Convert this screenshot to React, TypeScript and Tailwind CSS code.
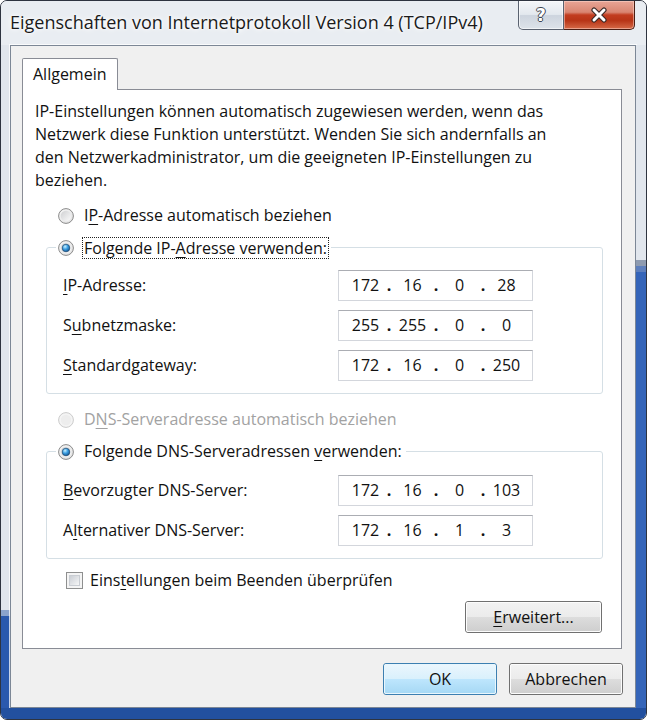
import React from "react";

const U = ({ children }: { children: React.ReactNode }) => (
  <span className="underline decoration-1 underline-offset-[3px]">{children}</span>
);

function Radio({ checked, disabled }: { checked?: boolean; disabled?: boolean }) {
  return (
    <svg width="16" height="16" viewBox="0 0 16 16" className="shrink-0">
      <defs>
        <linearGradient id="rOut" x1="0" y1="0" x2="1" y2="1">
          <stop offset="0" stopColor="#f6f6f6" />
          <stop offset="1" stopColor="#e2e2e2" />
        </linearGradient>
        <linearGradient id="rIn" x1="0" y1="0" x2="1" y2="1">
          <stop offset="0" stopColor="#cfd0d2" />
          <stop offset="1" stopColor="#fbfbfb" />
        </linearGradient>
        <radialGradient id="rDot" cx="0.38" cy="0.32" r="0.75">
          <stop offset="0" stopColor="#c8f0ff" />
          <stop offset="0.45" stopColor="#3ea1e4" />
          <stop offset="1" stopColor="#0d4d88" />
        </radialGradient>
      </defs>
      {disabled ? (
        <>
          <circle cx="8" cy="8" r="7.4" fill="#f4f4f4" stroke="#cbcbcb" strokeWidth="1" />
          <circle cx="8" cy="8" r="5.2" fill="#ededed" />
        </>
      ) : (
        <>
          <circle cx="8" cy="8" r="7.4" fill="url(#rOut)" stroke="#8a8a8a" strokeWidth="1" />
          <circle cx="8" cy="8" r="5.3" fill="url(#rIn)" />
          {checked && <circle cx="8" cy="8" r="3.8" fill="url(#rDot)" stroke="#1b466f" strokeWidth="0.7" />}
        </>
      )}
    </svg>
  );
}

function IpBox({ parts }: { parts: string[] }) {
  return (
    <div className="h-[31px] w-[195px] border border-[#d3d6dc] border-t-[#abadb3] bg-white flex items-center pl-[6px]">
      {parts.map((p, i) => (
        <React.Fragment key={i}>
          {i > 0 && <span className="w-[6px] text-center font-bold">.</span>}
          <span className="w-[41px] text-center">{p}</span>
        </React.Fragment>
      ))}
    </div>
  );
}

function Btn({ children, def, w }: { children: React.ReactNode; def?: boolean; w: string }) {
  return (
    <div
      className={
        def
          ? "h-[32px] rounded-[3px] border border-[#3c7fb1] " + w
          : "h-[32px] rounded-[3px] border border-[#707070] " + w
      }
    >
      <div
        className={
          def
            ? "h-full rounded-[2px] border border-[#e8f6fd] flex items-center justify-center bg-[linear-gradient(#eaf6fd_0%,#d9f0fc_50%,#bee6fd_50%,#a7d9f5_100%)]"
            : "h-full rounded-[2px] border border-[#fcfcfc] flex items-center justify-center bg-[linear-gradient(#f2f2f2_0%,#ebebeb_50%,#dddddd_50%,#cfcfcf_100%)]"
        }
      >
        {children}
      </div>
    </div>
  );
}

export default function App() {
  return (
    <div className="w-[647px] h-[720px] overflow-hidden bg-white">
      <div className="w-[647px] h-[720px] flex flex-col overflow-hidden rounded-[7px] border border-[#2e3440] bg-[#e4e9ef] font-['Open_Sans','Noto_Sans',sans-serif] text-[#111] text-[16px]">
        {/* title bar */}
        <div className="h-[44px] flex items-start shrink-0 bg-[#e9edf2]">
          <div className="pl-[9px] pt-[9px] text-[18px] leading-[24px] text-[#1a1a1a] whitespace-nowrap [text-shadow:0_0_8px_#fff,0_0_4px_#fff,0_0_2px_#fff]">
            Eigenschaften von Internetprotokoll Version 4 (TCP/IPv4)
          </div>
          <div className="ml-auto mr-[11px] flex h-[29px]">
            <div className="w-[46px] h-full rounded-bl-[5px] border border-t-0 border-[#5a6270] bg-[linear-gradient(#f4f6f9_0%,#e3e8ee_48%,#cdd4de_52%,#dde3ea_100%)] flex items-center justify-center shadow-[inset_0_0_0_1px_rgba(255,255,255,0.6)]">
              <span className="text-white font-bold text-[17px] leading-none font-['DejaVu_Sans',sans-serif] [text-shadow:-1px_0_#3d4350,1px_0_#3d4350,0_-1px_#3d4350,0_1px_#3d4350]">
                ?
              </span>
            </div>
            <div className="w-[71px] h-full rounded-br-[5px] border border-t-0 border-l-0 border-[#4a1e14] bg-[linear-gradient(#e8a596_0%,#d98672_40%,#c23d20_50%,#b83517_70%,#d66a48_100%)] flex items-center justify-center shadow-[inset_0_0_0_1px_rgba(255,220,210,0.5)]">
              <svg width="20" height="16" viewBox="0 0 20 16">
                <path d="M5 3 L15 13 M15 3 L5 13" stroke="#3a2a28" strokeWidth="5.2" strokeLinecap="round" />
                <path d="M5 3 L15 13 M15 3 L5 13" stroke="#ffffff" strokeWidth="3" strokeLinecap="round" />
              </svg>
            </div>
          </div>
        </div>

        {/* middle: left frame, client, right frame */}
        <div className="flex-1 flex min-h-0">
          <div className="w-[9px] shrink-0 flex flex-col">
            <div className="flex-1 bg-[#e1e6ed]" />
            <div className="h-[6px] bg-[#8aa3cc]" />
            <div className="h-[92px] bg-[#2a59ad]" />
          </div>

          {/* client area */}
          <div className="flex-1 bg-[#f0f0f0] border border-[#7c8796] shadow-[0_0_0_1px_rgba(255,255,255,0.75)] flex flex-col pl-[11px] pt-[12px] pb-[12px]">
            {/* tab strip */}
            <div className="flex mr-[13px]">
              <div className="relative z-10 -mb-px h-[32px] w-[96px] bg-white border border-b-0 border-[#898c95] rounded-t-[2px] pl-[10px] pt-[4px] leading-[23px]">
                Allgemein
              </div>
            </div>
            {/* panel */}
            <div className="flex-1 mr-[13px] bg-white border border-[#898c95] flex flex-col pl-[12px] pt-[10px] leading-[23px]">
              <div className="whitespace-nowrap">
                IP-Einstellungen können automatisch zugewiesen werden, wenn das
                <br />
                Netzwerk diese Funktion unterstützt. Wenden Sie sich andernfalls an
                <br />
                den Netzwerkadministrator, um die geeigneten IP-Einstellungen zu
                <br />
                beziehen.
              </div>

              <div className="mt-[12px] ml-[23px] h-[23px] flex items-center gap-[10px]">
                <Radio />
                <span>
                  I<U>P</U>-Adresse automatisch beziehen
                </span>
              </div>

              <fieldset className="mt-[9px] ml-[11px] w-[557px] border border-[#d5dfe5] rounded-[3px] pl-[16px] pt-[11px] pb-[12px]">
                <legend className="-ml-[7px] px-[2px] h-[23px]">
                  <div className="flex items-center gap-[8px] h-[23px]">
                    <Radio checked />
                    <span className="border border-dotted border-[#222] px-px leading-[20px]">
                      Folgende IP-<U>A</U>dresse verwenden:
                    </span>
                  </div>
                </legend>
                <div className="grid grid-cols-[275px_195px] gap-y-[9px] items-center">
                  <span>
                    <U>I</U>P-Adresse:
                  </span>
                  <IpBox parts={["172", "16", "0", "28"]} />
                  <span>
                    S<U>u</U>bnetzmaske:
                  </span>
                  <IpBox parts={["255", "255", "0", "0"]} />
                  <span>
                    <U>S</U>tandardgateway:
                  </span>
                  <IpBox parts={["172", "16", "0", "250"]} />
                </div>
              </fieldset>

              <div className="mt-[14px] ml-[23px] h-[23px] flex items-center gap-[10px] text-[#a2a2a2]">
                <Radio disabled />
                <span>
                  D<U>N</U>S-Serveradresse automatisch beziehen
                </span>
              </div>

              <fieldset className="mt-[9px] ml-[11px] w-[557px] border border-[#d5dfe5] rounded-[3px] pl-[16px] pt-[12px] pb-[12px]">
                <legend className="-ml-[7px] px-[2px] h-[23px]">
                  <div className="flex items-center gap-[10px] h-[23px]">
                    <Radio checked />
                    <span className="pr-[2px]">
                      Folgende DNS-Serveradressen <U>v</U>erwenden:
                    </span>
                  </div>
                </legend>
                <div className="grid grid-cols-[275px_195px] gap-y-[9px] items-center">
                  <span>
                    <U>B</U>evorzugter DNS-Server:
                  </span>
                  <IpBox parts={["172", "16", "0", "103"]} />
                  <span>
                    A<U>l</U>ternativer DNS-Server:
                  </span>
                  <IpBox parts={["172", "16", "1", "3"]} />
                </div>
              </fieldset>

              <div className="mt-[10px] ml-[31px] h-[23px] flex items-center gap-[7px]">
                <div className="w-[17px] h-[17px] border border-[#8e8f8f] bg-[#f4f4f4] p-[2px] shrink-0">
                  <div className="w-full h-full border border-[#c9cdd3] bg-[linear-gradient(135deg,#cbcfd5_0%,#e4e6e9_60%,#f6f6f6_100%)]" />
                </div>
                <span>
                  Eins<U>t</U>ellungen beim Beenden überprüfen
                </span>
              </div>

              <div className="mt-[9px] self-end mr-[19px]">
                <Btn w="w-[137px]">
                  <span>
                    <U>E</U>rweitert...
                  </span>
                </Btn>
              </div>
            </div>

            {/* bottom buttons */}
            <div className="mt-[14px] flex justify-end gap-[12px] pr-[12px]">
              <Btn def w="w-[114px]">
                <span>OK</span>
              </Btn>
              <Btn w="w-[114px]">
                <span>Abbrechen</span>
              </Btn>
            </div>
          </div>

          <div className="w-[10px] shrink-0 flex flex-col">
            <div className="h-[215px] bg-[#e1e6ed]" />
            <div className="h-[6px] bg-[#8e9bb0]" />
            <div className="h-[6px] bg-[#5d7fbd]" />
            <div className="flex-1 bg-[#3565b9]" />
          </div>
        </div>

        {/* bottom frame */}
        <div className="h-[11px] shrink-0 bg-[#22509f]" />
      </div>
    </div>
  );
}
